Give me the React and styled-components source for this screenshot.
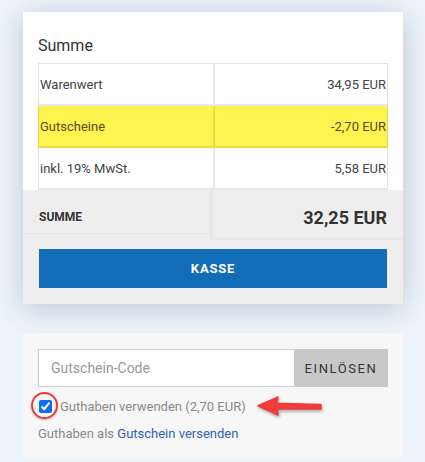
import React from "react";
import styled, { createGlobalStyle } from "styled-components";

const GlobalStyle = createGlobalStyle`
  body {
    margin: 0;
    background: #edf4fb;
    font-family: Roboto, "Liberation Sans", Arial, sans-serif;
  }
`;

const Page = styled.div`
  padding: 12px 0 4px 23px;
  width: 380px;
`;

const Card = styled.div`
  background: #fff;
  box-shadow: 0 4px 28px rgba(60, 80, 110, 0.28);
`;

const Title = styled.div`
  padding: 24px 15px 8px 15px;
  font-size: 16px;
  color: #333;
`;

const Table = styled.div`
  margin: 0 15px;
  border-top: 1px solid #e3e3e3;
`;

const Row = styled.div`
  display: grid;
  grid-template-columns: 174px 1fr;
  height: 40px;
  background: ${p => (p.$mark ? "#fff44f" : "#fff")};
  border-left: 1px solid ${p => (p.$mark ? "#e6dc48" : "#e3e3e3")};
  border-right: 1px solid ${p => (p.$mark ? "#e6dc48" : "#e3e3e3")};
  border-bottom: 2px solid ${p => (p.$mark ? "#e6dc48" : "#e8e8e8")};
`;

const Cell = styled.div`
  display: flex;
  align-items: center;
  justify-content: ${p => (p.$right ? "flex-end" : "flex-start")};
  padding: 0 1px;
  font-size: 13px;
  color: #444;
  border-left: ${p => (p.$right ? "2px solid #e8e8e8" : "none")};
  ${p => p.$mark && "border-left-color: #e6dc48; color: #5a4a1a;"}
`;

const Footer = styled.div`
  background: #eeeeee;
  padding-bottom: 16px;
`;

const TotalRow = styled.div`
  display: grid;
  grid-template-columns: 187px 1fr;
  align-items: start;
  height: 52px;
`;

const TotalLabel = styled.div`
  display: flex;
  align-items: center;
  height: 33px;
  padding: 10px 16px 0;
  font-size: 12px;
  font-weight: 700;
  color: #333;
  border-bottom: 1px solid #e6e6e6;
`;

const TotalValue = styled.div`
  display: flex;
  align-items: center;
  justify-content: flex-end;
  height: 42px;
  padding: 6px 16px 0 0;
  font-size: 18px;
  font-weight: 700;
  color: #333;
  border-left: 3px solid #e8e8e8;
  border-bottom: 2px solid #e8e8e8;
`;

const CheckoutButton = styled.button`
  display: block;
  width: 348px;
  height: 39px;
  margin: 7px 0 0 16px;
  border: none;
  background: #136cb8;
  color: #fff;
  font-family: inherit;
  font-size: 13px;
  font-weight: 700;
  letter-spacing: 0.8px;
`;

const Voucher = styled.div`
  margin-top: 29px;
  background: #f7f7f7;
  padding: 16px 15px 16px 15px;
`;

const CodeForm = styled.div`
  display: flex;
  height: 38px;
`;

const CodeInput = styled.input`
  flex: 1;
  box-sizing: border-box;
  height: 38px;
  border: 1px solid #cccccc;
  border-right: none;
  padding: 0 12px;
  font-family: inherit;
  font-size: 14px;
  color: #333;
  background: #fff;
  &::placeholder {
    color: #999;
  }
`;

const RedeemButton = styled.button`
  width: 94px;
  height: 38px;
  border: none;
  background: #c8c8c8;
  color: #333;
  font-family: inherit;
  font-size: 13px;
  letter-spacing: 1.6px;
`;

const CheckRow = styled.label`
  position: relative;
  display: flex;
  align-items: center;
  height: 22px;
  margin-top: 8px;
  font-size: 13px;
  color: #888;
`;

const Check = styled.input`
  width: 13px;
  height: 13px;
  margin: 0 8px 0 1px;
  accent-color: #0a6cf5;
`;

const Ring = styled.span`
  position: absolute;
  left: -7px;
  top: -3px;
  width: 23px;
  height: 23px;
  border: 2.5px solid #ea3b3b;
  border-radius: 50%;
  box-shadow: 0 1px 2px rgba(0, 0, 0, 0.25);
`;

const Arrow = styled.svg`
  margin-left: 11px;
  filter: drop-shadow(1px 2px 1.5px rgba(0, 0, 0, 0.3));
`;

const LinkLine = styled.div`
  margin-top: 9px;
  font-size: 13px;
  color: #888;
`;

const Link = styled.a`
  color: #2f60b3;
  text-decoration: none;
`;

const rows = [
  { label: "Warenwert", value: "34,95 EUR" },
  { label: "Gutscheine", value: "-2,70 EUR", mark: true },
  { label: "inkl. 19% MwSt.", value: "5,58 EUR" },
];

export default function App() {
  return (
    <Page>
      <GlobalStyle />
      <Card>
        <Title>Summe</Title>
        <Table>
          {rows.map(r => (
            <Row key={r.label} $mark={r.mark}>
              <Cell $mark={r.mark}>{r.label}</Cell>
              <Cell $right $mark={r.mark}>{r.value}</Cell>
            </Row>
          ))}
        </Table>
        <Footer>
          <TotalRow>
            <TotalLabel>SUMME</TotalLabel>
            <TotalValue>32,25 EUR</TotalValue>
          </TotalRow>
          <CheckoutButton>KASSE</CheckoutButton>
        </Footer>
      </Card>

      <Voucher>
        <CodeForm>
          <CodeInput placeholder="Gutschein-Code" />
          <RedeemButton>EINLÖSEN</RedeemButton>
        </CodeForm>
        <CheckRow>
          <Ring />
          <Check type="checkbox" defaultChecked />
          Guthaben verwenden (2,70 EUR)
          <Arrow width="66" height="20" viewBox="0 0 66 20">
            <path d="M64 8.5 L20 7.2 L21 1 L1 9.8 L21 19 L20.5 12.8 L64 13 Z" fill="#f03c3c" stroke="#f03c3c" strokeLinejoin="round" strokeWidth="1.5" />
          </Arrow>
        </CheckRow>
        <LinkLine>
          Guthaben als <Link href="#">Gutschein versenden</Link>
        </LinkLine>
      </Voucher>
    </Page>
  );
}
